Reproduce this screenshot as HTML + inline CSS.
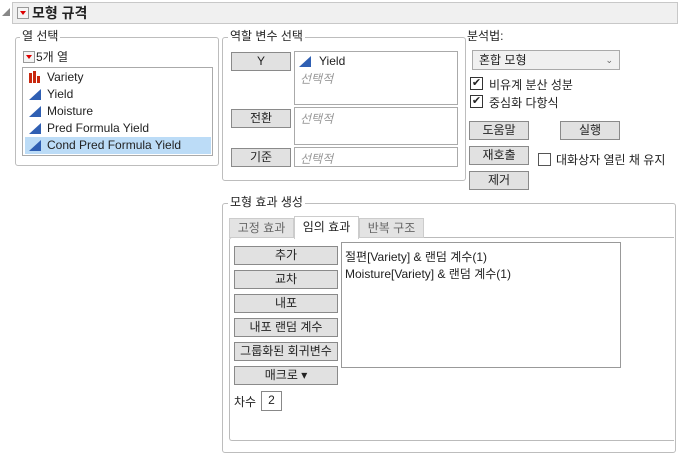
<!DOCTYPE html>
<html><head><meta charset="utf-8"><style>
*{box-sizing:border-box;margin:0;padding:0}
body{width:680px;height:454px;background:#fff;position:relative;overflow:hidden;font-family:"Liberation Sans","Noto Sans CJK KR",sans-serif;font-size:12px;color:#222}
.a{position:absolute}
.grp{position:absolute;border:1px solid #bdbdbd;border-radius:3px}
.lbl{position:absolute;background:#fff;padding:0 2px;line-height:14px}
.btn{position:absolute;background:#e1e1e1;border:1px solid #8a8a8a;text-align:center;line-height:16px;height:19px}
.box{position:absolute;border:1px solid #aaa;background:#fff}
.it{color:#999;font-style:italic}
.rb{position:absolute;width:12px;height:12px;border:1px solid #999;background:#f4f4f4}
.rb:after{content:"";position:absolute;left:2px;top:3px;border-left:3px solid transparent;border-right:3px solid transparent;border-top:4px solid #d00}
.cb{position:absolute;width:13px;height:13px;border:1px solid #333;background:#fff;font-size:11px;line-height:11px;text-align:center}
.row{position:absolute;left:2px;height:17px;line-height:17px;padding-left:22px;font-size:12px;width:186px}
.tri{position:absolute;left:4px;top:3px;width:0;height:0;border-left:12px solid transparent;border-bottom:11px solid #2f5fb3}
</style></head><body>
<div class="a" style="left:2px;top:8px;width:0;height:0;border-left:8px solid transparent;border-bottom:8px solid #888"></div>
<div class="a" style="left:12px;top:2px;width:666px;height:22px;background:#f0f0f0;border:1px solid #c8c8c8"></div>
<div class="rb" style="left:17px;top:7px"></div>
<div class="a" style="left:32px;top:4px;font-size:14px;font-weight:bold;line-height:18px">모형 규격</div>

<div class="grp" style="left:15px;top:37px;width:204px;height:129px"></div>
<div class="lbl" style="left:20px;top:29px">열 선택</div>
<div class="rb" style="left:23px;top:51px"></div>
<div class="a" style="left:36px;top:50px;line-height:14px">5개 열</div>
<div class="box" style="left:22px;top:67px;width:191px;height:89px">
<div class="row" style="top:1px"><span class="a" style="left:4px;top:4px;width:3px;height:10px;background:#c8280e"></span><span class="a" style="left:8px;top:2px;width:3px;height:12px;background:#c8280e"></span><span class="a" style="left:12px;top:7px;width:3px;height:7px;background:#c8280e"></span>Variety</div>
<div class="row" style="top:18px"><span class="tri"></span>Yield</div>
<div class="row" style="top:35px"><span class="tri"></span>Moisture</div>
<div class="row" style="top:52px"><span class="tri"></span>Pred Formula Yield</div>
<div class="row" style="top:69px;background:#bcdcf7"><span class="tri"></span>Cond Pred Formula Yield</div>
</div>

<div class="grp" style="left:222px;top:37px;width:244px;height:144px"></div>
<div class="lbl" style="left:228px;top:29px">역할 변수 선택</div>
<div class="btn" style="left:231px;top:52px;width:60px">Y</div>
<div class="box" style="left:294px;top:51px;width:164px;height:54px"><span class="tri" style="left:4px;top:4px"></span><span class="a" style="left:24px;top:2px">Yield</span><span class="a it" style="left:5px;top:18px">선택적</span></div>
<div class="btn" style="left:231px;top:109px;width:60px">전환</div>
<div class="box" style="left:294px;top:107px;width:164px;height:38px"><span class="a it" style="left:5px;top:2px">선택적</span></div>
<div class="btn" style="left:231px;top:148px;width:60px">기준</div>
<div class="box" style="left:294px;top:147px;width:164px;height:20px"><span class="a it" style="left:5px;top:2px">선택적</span></div>

<div class="a" style="left:467px;top:29px;line-height:14px">분석법:</div>
<div class="a" style="left:472px;top:50px;width:148px;height:20px;background:#f0f0f0;border:1px solid #aaa;line-height:18px;padding-left:6px">혼합 모형<span class="a" style="right:6px;top:0;font-size:9px;color:#666">⌄</span></div>
<div class="cb" style="left:470px;top:77px">✔</div><div class="a" style="left:489px;top:76px">비유계 분산 성분</div>
<div class="cb" style="left:470px;top:95px">✔</div><div class="a" style="left:489px;top:94px">중심화 다항식</div>
<div class="btn" style="left:469px;top:121px;width:60px">도움말</div>
<div class="btn" style="left:560px;top:121px;width:60px">실행</div>
<div class="btn" style="left:469px;top:146px;width:60px">재호출</div>
<div class="btn" style="left:469px;top:171px;width:60px">제거</div>
<div class="cb" style="left:538px;top:153px;border-color:#555"></div><div class="a" style="left:556px;top:151px">대화상자 열린 채 유지</div>

<div class="grp" style="left:222px;top:203px;width:454px;height:250px"></div>
<div class="lbl" style="left:228px;top:195px">모형 효과 생성</div>
<div class="a" style="left:229px;top:237px;width:445px;height:204px;border:1px solid #bbb;border-right:none;border-radius:3px 0 0 3px"></div>
<div class="a" style="left:229px;top:218px;width:65px;height:20px;background:#e3e3e3;border:1px solid #ccc;color:#666;text-align:center;line-height:18px">고정 효과</div>
<div class="a" style="left:294px;top:216px;width:65px;height:23px;background:#fff;border:1px solid #ccc;border-bottom:none;text-align:center;line-height:21px">임의 효과</div>
<div class="a" style="left:359px;top:218px;width:65px;height:20px;background:#e3e3e3;border:1px solid #ccc;color:#666;text-align:center;line-height:18px">반복 구조</div>
<div class="btn" style="left:234px;top:246px;width:104px">추가</div>
<div class="btn" style="left:234px;top:270px;width:104px">교차</div>
<div class="btn" style="left:234px;top:294px;width:104px">내포</div>
<div class="btn" style="left:234px;top:318px;width:104px">내포 랜덤 계수</div>
<div class="btn" style="left:234px;top:342px;width:104px">그룹화된 회귀변수</div>
<div class="btn" style="left:234px;top:366px;width:104px">매크로 ▾</div>
<div class="a" style="left:234px;top:393px">차수</div>
<div class="box" style="left:261px;top:391px;width:21px;height:20px;border-color:#888;text-align:center;line-height:16px">2</div>
<div class="box" style="left:341px;top:242px;width:280px;height:126px;border-color:#999"><div class="a" style="left:3px;top:5px">절편[Variety] &amp; 랜덤 계수(1)</div><div class="a" style="left:3px;top:22px">Moisture[Variety] &amp; 랜덤 계수(1)</div></div>
</body></html>
